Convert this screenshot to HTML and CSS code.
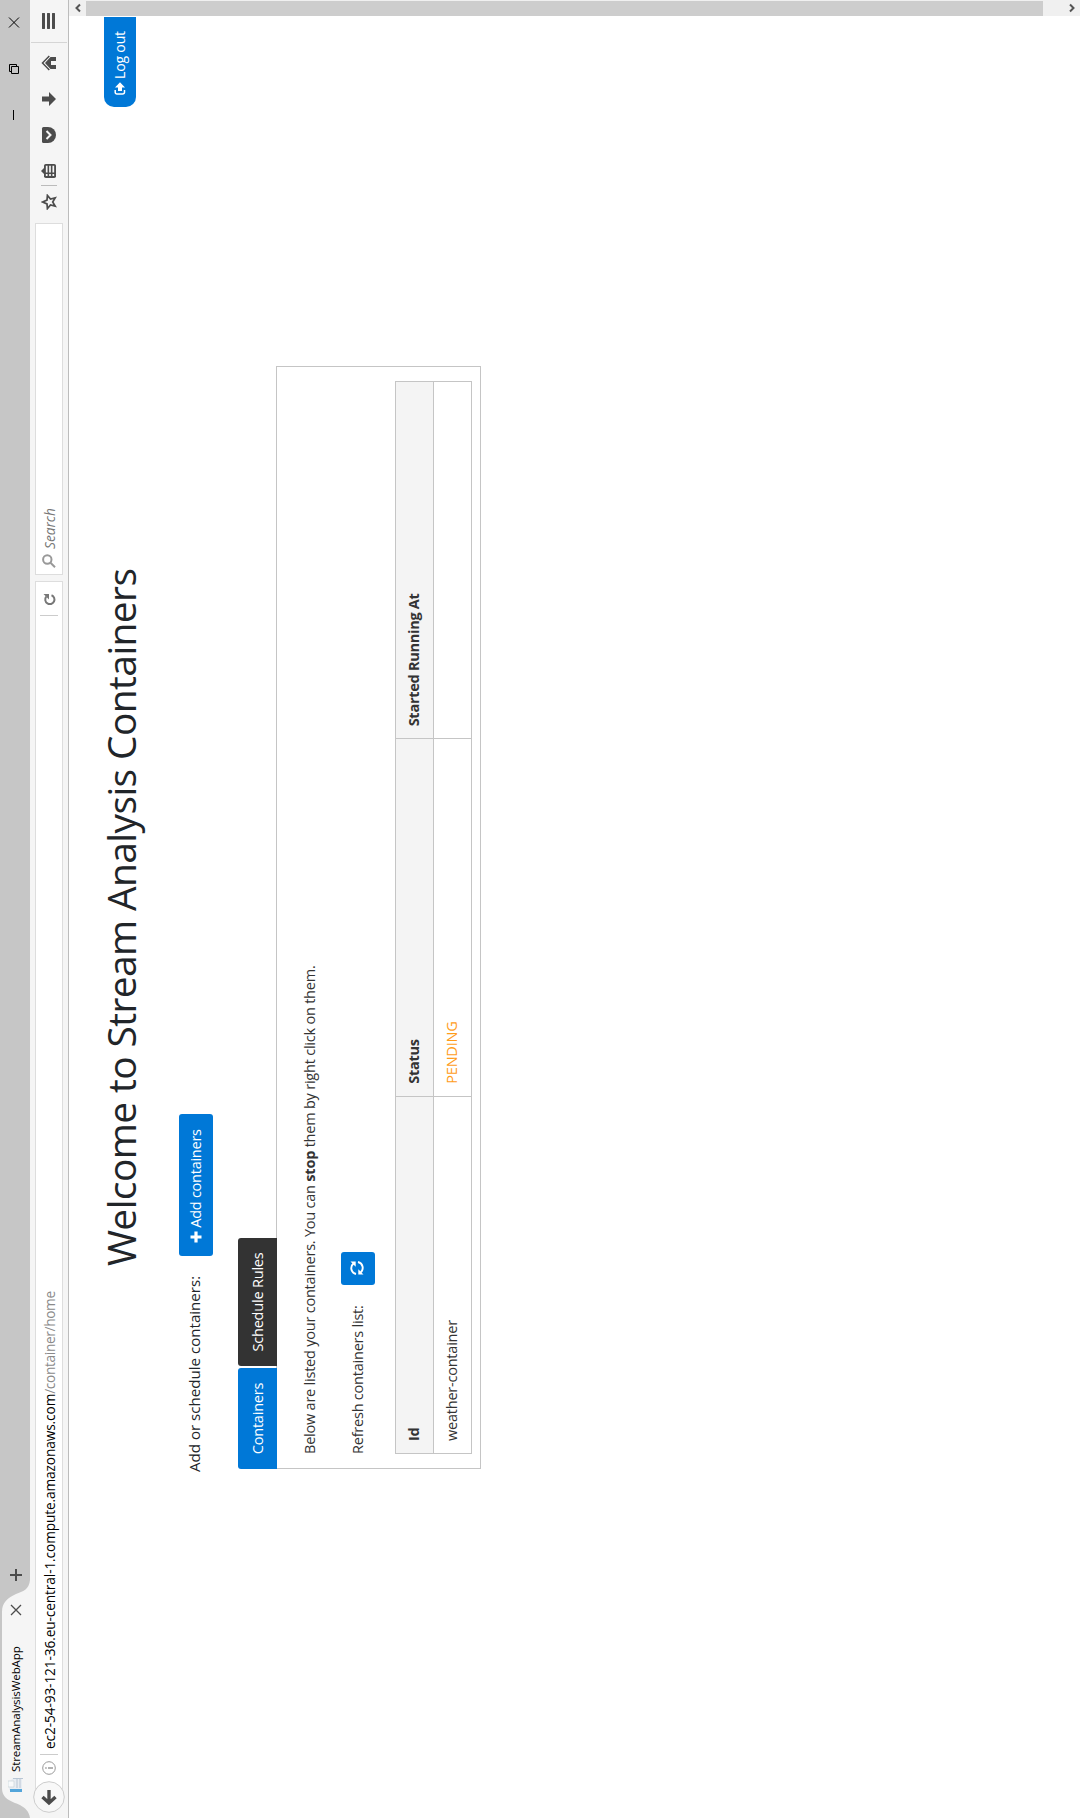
FILE: index.html
```html
<!DOCTYPE html>
<html lang="en">
<head>
<meta charset="utf-8">
<title>StreamAnalysisWebApp</title>
<link rel="stylesheet" href="styles.css">
</head>
<body>
<div class="frame">
<div class="screen">
  <header class="tabbar">
    <div class="tab">
      <svg class="tab-shape" width="238" height="30" viewBox="0 0 238 30"><path d="M0 30C7 29 10 25 13 20C17 11 19 2 30 2H206C216 2 220 8 224 16C227 23 228 29 238 30Z"/></svg>
      <svg class="favicon" width="16" height="16" viewBox="0 0 16 16"><path d="M3 1h8l4 4v9H3z" fill="#e8edf2"/><path d="M6 0h6v6H6z" fill="#f8fafb" stroke="#c9d2d9" stroke-width=".7"/><path d="M5 9h10M5 12h10M14.500 5v10" stroke="#b9c6d4"/><path d="M1 2h3v12H1z" fill="#53a5da"/></svg>
      <span class="tab-title">StreamAnalysisWebApp</span>
      <svg class="tab-close" width="12" height="12" viewBox="0 0 12 12"><path d="M1 1L11 11M11 1L1 11"/></svg>
    </div>
    <svg class="new-tab" width="12" height="12" viewBox="0 0 12 12"><path d="M6 0V12M0 6H12"/></svg>
    <div class="window-controls">
      <svg width="10" height="12" viewBox="0 0 10 12"><path d="M0 5.500H10"/></svg>
      <svg width="10" height="12" viewBox="0 0 10 12"><path d="M.5 3.500h7v7h-7zM2.500 3V1.500h7v7H8"/></svg>
      <svg width="11" height="12" viewBox="0 0 11 12"><path d="M.5 1L10.500 11M10.500 1L.5 11"/></svg>
    </div>
  </header>

  <div class="toolbar">
    <svg class="back" width="32" height="32" viewBox="0 0 32 32"><circle cx="16" cy="16" r="15.300"/><path d="M23 16H11M16 9.500L10 16L16 22.500"/></svg>
    <div class="urlbar">
      <svg class="info" width="14" height="14" viewBox="0 0 14 14"><circle cx="7" cy="7" r="6.300"/><path d="M7 3.200V4.700M7 6V11" stroke-width="1.500"/></svg>
      <i class="field-rule"></i>
      <span class="url">ec2-54-93-121-36.eu-central-1.compute.amazonaws.com<span class="path">/container/home</span></span>
      <i class="field-rule end"></i>
      <svg class="reload" width="13" height="13" viewBox="0 0 13 13"><path d="M9.300 3.200A4.600 4.600 0 1 0 10.800 8.500" fill="none" stroke="#777" stroke-width="2"/><path d="M12 .5V6H6.500z" fill="#777"/></svg>
    </div>
    <div class="searchbar">
      <svg width="14" height="14" viewBox="0 0 14 14"><circle cx="8.500" cy="5.300" r="4.200"/><path d="M5.300 8.500L.8 13"/></svg>
      <span class="search-text">Search</span>
    </div>
    <div class="tools">
      <svg width="16" height="16" viewBox="0 0 16 16"><path d="M8 1.600L9.900 6L14.600 6.400L11 9.500L12.100 14.200L8 11.700L3.900 14.200L5 9.500L1.400 6.400L6.100 6Z" fill="none" stroke="#4c4c4c" stroke-width="1.700"/></svg>
      <i class="tool-rule"></i>
      <svg width="16" height="16" viewBox="0 0 16 16"><path d="M4.500 3.500L8 0L11.500 3.500z" fill="#4c4c4c"/><rect x="1" y="3" width="14" height="12" rx="1.800" fill="#4c4c4c"/><path d="M3 5.700h2M3 9h2M3 12.300h2M6.500 5.700h6.700M6.500 9h6.700M6.500 12.300h6.700" stroke="#f5f5f5" stroke-width="1.700"/></svg>
      <svg width="16" height="16" viewBox="0 0 16 16"><path d="M1.500 1h13Q16 1 16 2.500V7A8 8 0 0 1 0 7V2.500Q0 1 1.500 1z" fill="#4c4c4c"/><path d="M4 5.500L8 9.500L12 5.500" fill="none" stroke="#f5f5f5" stroke-width="2"/></svg>
      <svg width="16" height="16" viewBox="0 0 16 16"><path d="M5.500 1h5v7H15L8 15L1 8h4.500z" fill="#4c4c4c"/></svg>
      <svg width="16" height="16" viewBox="0 0 16 16"><path d="M8 4L14 9.500V15H10V10H6V15H2V9.500z" fill="#4c4c4c"/><path d="M1 8.300L8 1.500L15 8.300" fill="none" stroke="#4c4c4c" stroke-width="1.500"/></svg>
      <i class="menu-rule"></i>
      <svg width="16" height="16" viewBox="0 0 16 16"><path d="M1 2.500H15M1 7.500H15M1 12.500H15" stroke="#4c4c4c" stroke-width="3" stroke-linecap="round"/></svg>
    </div>
  </div>

  <div class="viewport">
    <main class="page">
      <button class="logout"><svg width="13" height="12" viewBox="0 0 13 12"><path d="M5 1.200H2.700Q1 1.200 1 3V8.500Q1 10.500 2.700 10.500H5" fill="none" stroke="#fff" stroke-width="1.500"/><path d="M7.500 1L12.700 6L7.500 11V8H4V4H7.500z" fill="#fff"/></svg><span>Log out</span></button>
      <h1>Welcome to Stream Analysis Containers</h1>
      <div class="content">
        <div class="add-row">
          <span class="add-label">Add or schedule containers:</span>
          <button class="btn add"><svg width="12" height="12" viewBox="0 0 12 12"><path d="M6 .5V11.500M.5 6H11.500" stroke="#fff" stroke-width="3.200"/></svg><span>Add containers</span></button>
        </div>
        <nav class="tabs"><a class="active">Containers</a><a>Schedule Rules</a></nav>
        <section class="panel">
          <p>Below are listed your containers. You can <b>stop</b> them by right click on them.</p>
          <div class="refresh-row">
            <span class="refresh-label">Refresh containers list:</span>
            <button class="btn refresh"><svg width="14" height="14" viewBox="0 0 14 14"><path d="M1 6A6 6 0 0 1 11.500 3.500M13 8A6 6 0 0 1 2.500 10.500" fill="none" stroke="#fff" stroke-width="1.900"/><path d="M13.500 .5V5.700H8.300zM.5 13.500V8.300H5.700z" fill="#fff"/></svg></button>
          </div>
          <table>
            <thead><tr><th>Id</th><th>Status</th><th>Started Running At</th></tr></thead>
            <tbody><tr><td>weather-container</td><td class="pending">PENDING</td><td></td></tr></tbody>
          </table>
        </section>
      </div>
    </main>
    <aside class="scrollbar">
      <svg width="16" height="17" viewBox="0 0 16 17"><path d="M4.500 11L8 7.500L11.500 11"/></svg>
      <div class="thumb"></div>
      <svg class="down" width="16" height="17" viewBox="0 0 16 17"><path d="M4.500 7L8 10.500L11.500 7"/></svg>
    </aside>
  </div>
</div>
</div>
</body>
</html>
```
FILE: styles.css
```css
* { box-sizing: border-box; }
html, body { margin: 0; background: #fff; }
body { font-family: "Open Sans", "Noto Sans", sans-serif; }
svg { display: block; flex: none; }

.frame { width: 1080px; height: 1818px; overflow: hidden; }

/* Landscape desktop turned a quarter counter-clockwise onto a portrait page */
.screen {
  width: 1818px; height: 1080px;
  display: flex; flex-direction: column;
  transform-origin: 0 0;
  transform: translateY(1818px) rotate(-90deg);
  background: #fff; color: #212529;
}

.tabbar { height: 30px; flex: none; display: flex; align-items: flex-start; background: #c6c6c6; }
.tab { position: relative; width: 237px; height: 30px; display: flex; align-items: center; padding: 2px 0 0 25px; }
.tab-shape { position: absolute; left: 0; top: 0; fill: #f5f5f5; }
.favicon, .tab-title, .tab-close { position: relative; }
.tab-title { margin-left: 5px; width: 156px; font-size: 11.6px; letter-spacing: -.13px; line-height: 26px; color: #000; white-space: nowrap; }
.tab-close { stroke: #4c4c4c; stroke-width: 1.3; }
.new-tab { margin-top: 10px; stroke: #4c4c4c; stroke-width: 2; }
.window-controls { margin: 8px 17px 0 auto; display: flex; gap: 36px; fill: none; stroke: #000; }

.toolbar { height: 39px; flex: none; display: flex; align-items: flex-start; background: #f5f5f5; border-bottom: 1px solid #bcbcbc; }
.back { position: relative; z-index: 1; margin: 3px 0 0 5px; fill: #f8f8f8; stroke: #ccc; }
.back path { fill: none; stroke: #4c4c4c; stroke-width: 3.4; }
.urlbar, .searchbar { height: 28px; margin-top: 5px; display: flex; align-items: center; background: #fff; border: 1px solid #ddd; }
.urlbar { width: 1216px; margin-left: -16px; padding-left: 21px; }
.info { fill: none; stroke: #999; }
.field-rule { width: 1px; height: 18px; margin-left: 6px; background: #ccc; }
.field-rule.end { margin-left: auto; }
.url { margin-left: 5px; padding-top: 2px; font-size: 13.7px; letter-spacing: -.12px; line-height: 24px; color: #000; white-space: nowrap; }
.path { color: #8a8a8a; letter-spacing: -.35px; }
.reload { margin: 0 11px 0 9px; }
.searchbar { width: 352px; margin-left: 6px; padding-left: 6px; gap: 5px; }
.searchbar svg { fill: none; stroke: #999; stroke-width: 2; }
.search-text { padding-top: 2px; font-size: 13.7px; font-style: italic; line-height: 24px; color: #777; }
.tools { display: flex; align-items: center; height: 38px; margin-left: 13px; }
.tools svg + svg { margin-left: 20px; }
.tool-rule { width: 1px; height: 16px; margin: 0 6px 0 8px; background: #bbb; }
.menu-rule { width: 1px; height: 36px; margin: 0 13px 0 12px; background: #d5d5d5; }

.viewport { flex: 1; display: flex; min-height: 0; }
.page { flex: 1; display: flex; flex-direction: column; }
.logout {
  display: flex; align-items: center; align-self: flex-end;
  width: 90px; height: 32px; margin: 35px 1px 0 0; padding: 0 0 0 12px; gap: 3px;
  border: 0; border-radius: 10px 0 0 10px; background: #0078d7; color: #fff;
  font: 14px/32px "Open Sans", sans-serif; letter-spacing: -.15px; white-space: nowrap;
}
h1 { margin: -45px 0 0; padding-left: 552px; height: 60px; font-size: 39px; letter-spacing: -.64px; font-weight: 400; line-height: 60px; white-space: nowrap; }
.content { width: 1103px; margin: 28px 0 0 349px; }
.add-row { display: flex; align-items: center; height: 34px; margin-left: -3px; }
.add-label { width: 216px; font-size: 15.1px; line-height: 30px; padding-bottom: 4px; white-space: nowrap; }
.btn { display: flex; align-items: center; justify-content: center; height: 34px; padding: 0; border: 0; border-radius: 3px; background: #0078d7; color: #fff; font: 14.5px/34px "Open Sans", sans-serif; letter-spacing: -.25px; white-space: nowrap; }
.add { width: 142px; gap: 3px; padding-right: 2px; }
.tabs { display: flex; gap: 2px; margin-top: 25px; height: 39px; font-size: 14.5px; letter-spacing: -.2px; line-height: 39px; color: #fff; position: relative; }
.tabs a { width: 128px; text-align: center; background: #333; border-radius: 3px 3px 0 0; white-space: nowrap; }
.tabs .active { width: 101px; background: #0078d7; }
.panel { height: 205px; margin-top: -1px; border: 1px solid #c5c5c5; padding: 22px 15px 0 14px; font-size: 14.5px; letter-spacing: -.22px; color: #333; }
.panel p { margin: 0; line-height: 22px; white-space: nowrap; }
.refresh-row { display: flex; align-items: center; height: 34px; margin: 20px 0; }
.refresh-label { width: 169px; line-height: 34px; white-space: nowrap; }
.refresh { width: 33px; padding-bottom: 2px; }
table { width: 1073px; table-layout: fixed; border-collapse: collapse; }
th, td { height: 38px; padding: 0 12px 1px; border: 1px solid #c5c5c5; text-align: left; line-height: 22px; }
th { background: #f4f4f4; font-weight: 700; letter-spacing: -.27px; }
.pending { color: #ff9c1a; }

.scrollbar { width: 16px; display: flex; flex-direction: column; background: #f0f0f0; }
.scrollbar svg { fill: none; stroke: #555; stroke-width: 2; }
.thumb { width: 15px; height: 957px; background: #cdcdcd; }
.down { margin-top: auto; }
```
